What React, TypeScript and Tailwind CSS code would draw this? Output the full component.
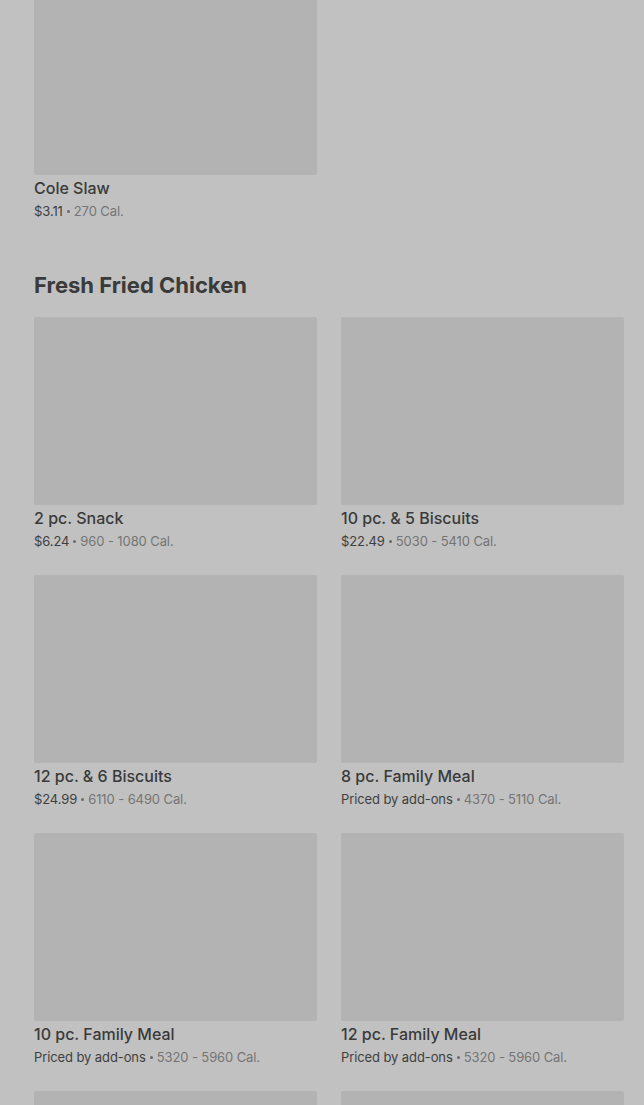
import React from "react";

type Item = { name: string; price: string; cal: string };

const items: Item[] = [
  { name: "2 pc. Snack", price: "$6.24", cal: "960 - 1080 Cal." },
  { name: "10 pc. & 5 Biscuits", price: "$22.49", cal: "5030 - 5410 Cal." },
  { name: "12 pc. & 6 Biscuits", price: "$24.99", cal: "6110 - 6490 Cal." },
  { name: "8 pc. Family Meal", price: "Priced by add-ons", cal: "4370 - 5110 Cal." },
  { name: "10 pc. Family Meal", price: "Priced by add-ons", cal: "5320 - 5960 Cal." },
  { name: "12 pc. Family Meal", price: "Priced by add-ons", cal: "5320 - 5960 Cal." },
];

function Card({ item }: { item?: Item }) {
  return (
    <div className="flex flex-col">
      <div className="h-[188px] w-full rounded-[2px] bg-[#b3b3b3]" />
      {item && (
        <>
          <div className="mt-[2px] h-[22px] text-[16px] leading-[22px] font-medium text-[#3a3a3a]">{item.name}</div>
          <div className="mt-[2px] flex h-[20px] items-center gap-[4px] text-[13px] leading-[20px] tracking-[-0.1px] whitespace-nowrap text-[#3f3f3f]">
            <span>{item.price}</span>
            <span className="h-[3px] w-[3px] rounded-full bg-[#6a6a6a]" />
            <span className="text-[#757575]">{item.cal}</span>
          </div>
        </>
      )}
    </div>
  );
}

export default function App() {
  return (
    <div
      className="h-[1105px] w-[644px] overflow-hidden bg-[#c1c1c1] pl-[34px] pr-[20px]"
      style={{ fontFamily: "Inter, 'Liberation Sans', sans-serif" }}
    >
      <div className="-mt-[13px] grid grid-cols-2 gap-x-[24px]">
        <Card item={{ name: "Cole Slaw", price: "$3.11", cal: "270 Cal." }} />
      </div>
      <h2 className="mt-[50px] text-[22px] leading-[28px] font-bold text-[#3a3a3a]">
        Fresh Fried Chicken
      </h2>
      <div className="mt-[18px] grid grid-cols-2 gap-x-[24px] gap-y-[24px]">
        {items.map((it, i) => (
          <Card key={i} item={it} />
        ))}
        <Card />
        <Card />
      </div>
    </div>
  );
}
